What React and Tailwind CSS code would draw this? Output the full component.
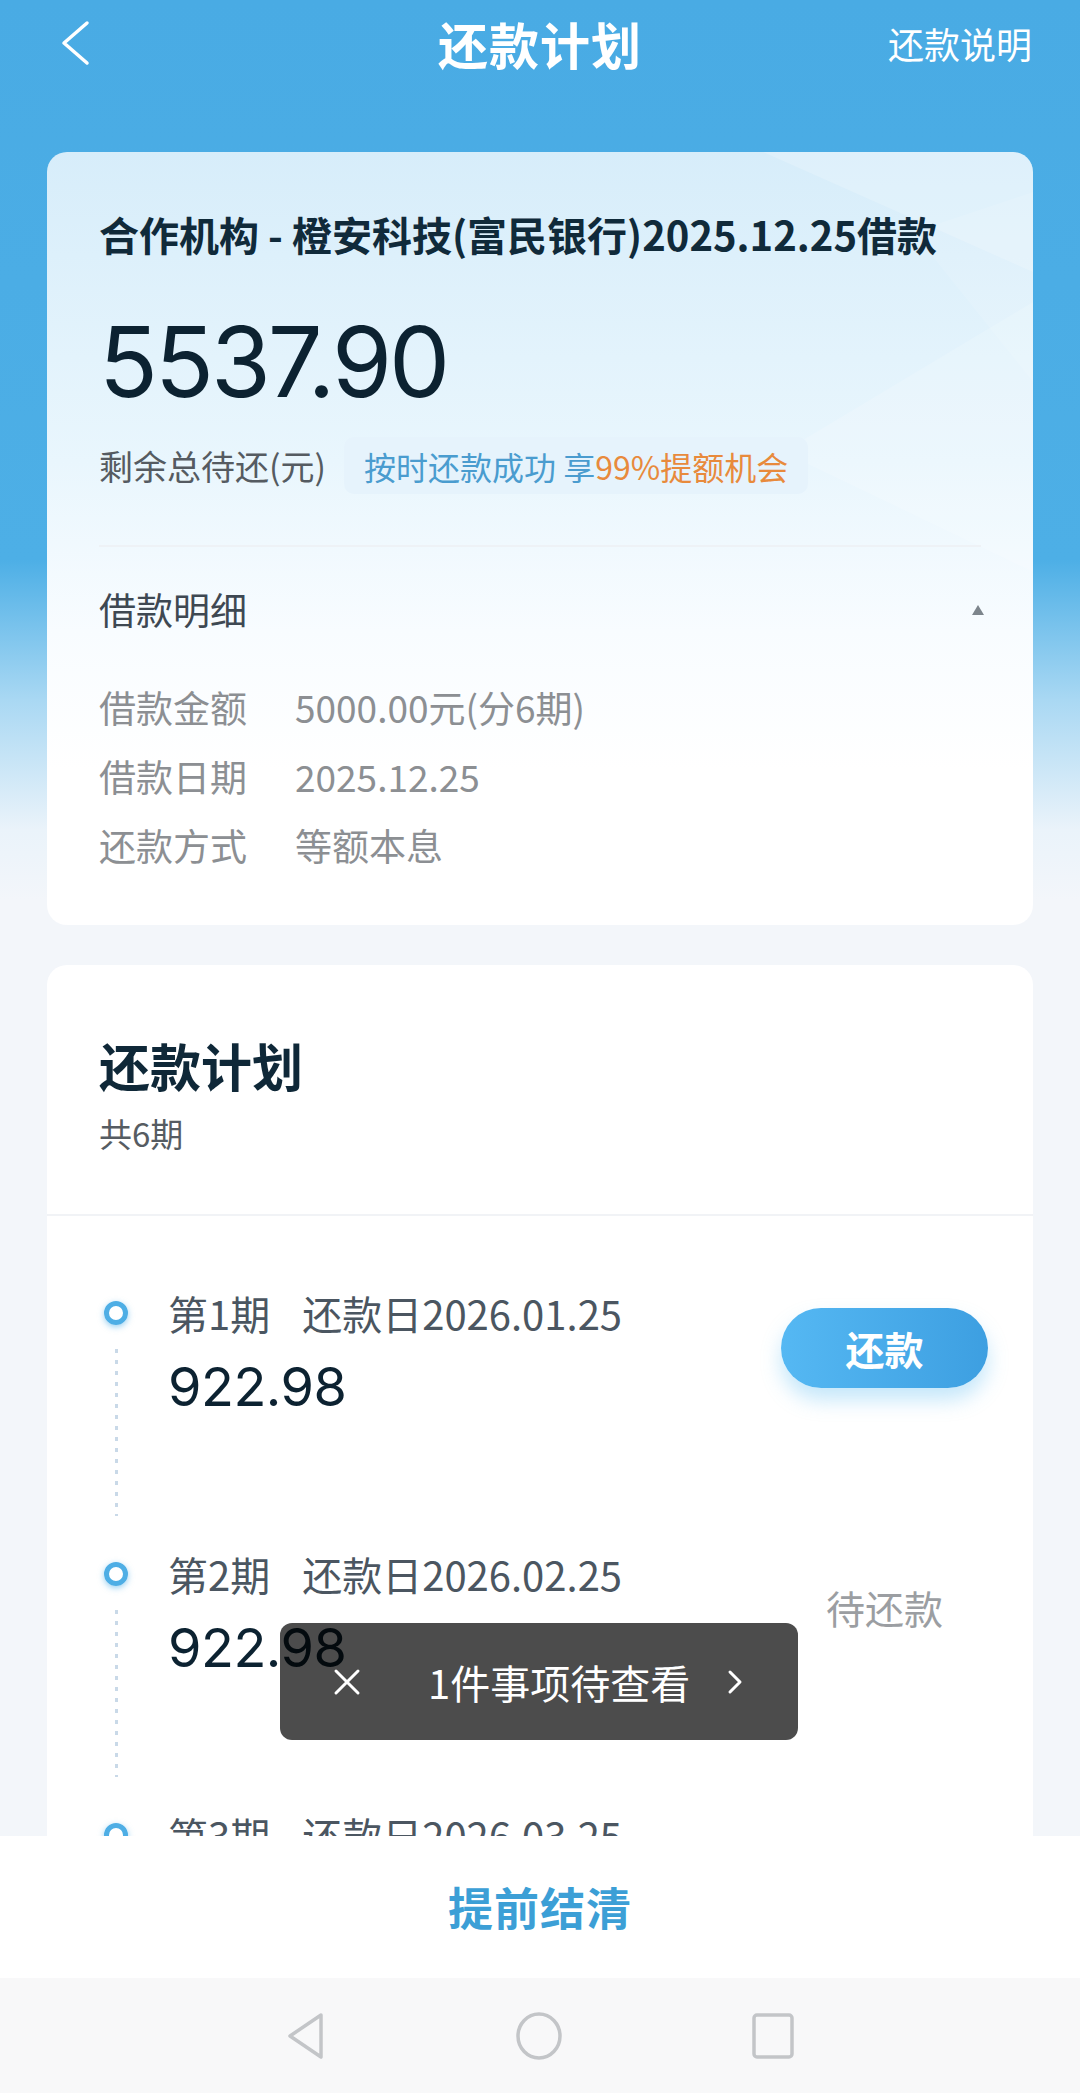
import React from "react";

const PLANS = [
  { no: 1, date: "2026.01.25", amount: "922.98", due: true },
  { no: 2, date: "2026.02.25", amount: "922.98", due: false },
  { no: 3, date: "2026.03.25", amount: "922.98", due: false },
];

const DETAILS = [
  { label: "借款金额", value: "5000.00元(分6期)" },
  { label: "借款日期", value: "2025.12.25" },
  { label: "还款方式", value: "等额本息" },
];

const Header = () => (
  <div className="h-[86px] grid grid-cols-[1fr_auto_1fr] items-center text-white">
    <div className="pl-[60px]">
      <svg width="32" height="46" viewBox="0 0 32 46" fill="none">
        <polyline points="27,3 4,23 27,43" stroke="#fff" strokeWidth="3.5" strokeLinecap="round" strokeLinejoin="round" />
      </svg>
    </div>
    <div className="text-[50px] font-bold leading-none tracking-[1px]">还款计划</div>
    <div className="text-right pr-[48px] text-[36px] leading-none">还款说明</div>
  </div>
);

const LoanCard = () => (
  <div className="relative overflow-hidden rounded-[20px] bg-[linear-gradient(180deg,#d7edfa_0%,#e9f6fd_40%,#f8fcff_62%,#ffffff_80%)] pt-[56px] pb-[45px] px-[52px]">
    {/* faint decoration top right */}
    <svg className="absolute right-0 top-0" width="420" height="560" viewBox="0 0 420 560" fill="none">
      <polygon points="150,0 420,0 420,120" fill="#ffffff" opacity="0.18" />
      <polygon points="420,150 170,300 420,420" fill="#ffffff" opacity="0.16" />
      <polygon points="300,80 420,40 420,230" fill="#ffffff" opacity="0.1" />
    </svg>

    <div className="relative">
      <div className="text-[40px] font-bold leading-[52px] text-[#102a3a] whitespace-nowrap">
        合作机构 - 橙安科技(富民银行)2025.12.25借款
      </div>
      <div className="mt-[52px] font-['Inter',sans-serif] text-[97px] font-normal leading-[100px] tracking-[-3px] text-[#0c2231]">
        5537.90
      </div>
      <div className="mt-[25px] h-[57px] flex items-center">
        <span className="text-[34px] text-[#555b61]">剩余总待还(元)</span>
        <span className="ml-[18px] h-[57px] flex items-center rounded-[10px] bg-[#e6f3fc] px-[20px] text-[32px]">
          <span className="text-[#4a9ccf]">按时还款成功 享</span>
          <span className="text-[#e88a3c]">99%提额机会</span>
        </span>
      </div>
      <div className="mt-[51px] h-[2px] bg-[#eef2f6]" />
      <div className="mt-[39px] h-[48px] flex items-center justify-between">
        <span className="text-[37px] text-[#3e4852]">借款明细</span>
        <svg width="14" height="12" viewBox="0 0 14 12" className="mr-[-4px]">
          <polygon points="7,1 13,11 1,11" fill="#7d858c" />
        </svg>
      </div>
      <div className="mt-[39px]">
        {DETAILS.map((d) => (
          <div key={d.label} className="h-[69px] flex items-center text-[37px] text-[#8c8f93]">
            <span className="w-[196px]">{d.label}</span>
            <span>{d.value}</span>
          </div>
        ))}
      </div>
    </div>
  </div>
);

const PlanItem = ({ item }) => (
  <div className="flex h-[261px] pl-[49px]">
    {/* timeline */}
    <div className="w-[40px] flex flex-col items-center">
      <div className="h-[48px] flex items-center">
        <div className="w-[24px] h-[24px] rounded-full border-[5px] border-[#4eaee5] shadow-[0_2px_6px_rgba(70,170,230,0.55)]" />
      </div>
      <div className="mt-[12px] w-[3px] h-[167px] bg-[repeating-linear-gradient(to_bottom,#c9d9e8_0px,#c9d9e8_4px,transparent_4px,transparent_11px)]" />
    </div>

    <div className="ml-[32px] flex-1">
      <div className="text-[40px] leading-[48px] text-[#4b5661] whitespace-nowrap">
        第{item.no}期<span className="ml-[32px]">还款日{item.date}</span>
      </div>
      <div className="mt-[15px] font-['Inter',sans-serif] text-[54px] leading-[70px] tracking-[-0.5px] text-[#0c2231]">
        {item.amount}
      </div>
    </div>

    <div className="w-[207px] mr-[45px] flex flex-col items-center">
      {item.due ? (
        <button className="mt-[19px] w-[207px] h-[80px] rounded-full bg-[linear-gradient(90deg,#55b8f3,#3d9fe1)] shadow-[0_12px_20px_rgba(90,185,240,0.35)] text-white text-[39px] font-bold">
          还款
        </button>
      ) : (
        <div className="mt-[33px] text-[39px] leading-[48px] text-[#9b9ea2]">待还款</div>
      )}
    </div>
  </div>
);

const PlanCard = () => (
  <div className="mt-[40px] rounded-t-[20px] bg-white">
    <div className="pt-[70px] pl-[52px]">
      <div className="text-[51px] font-bold leading-[60px] text-[#0f2838]">还款计划</div>
      <div className="mt-[16px] text-[33px] leading-[44px] text-[#565c62]">共6期</div>
    </div>
    <div className="mt-[59px] h-[2px] bg-[#f1f3f6]" />
    <div className="pt-[73px]">
      {PLANS.map((p) => (
        <PlanItem key={p.no} item={p} />
      ))}
    </div>
  </div>
);

const NavBar = () => (
  <div className="h-[115px] bg-[#f8f8f9] flex items-center justify-center gap-[188px]">
    <svg width="42" height="48" viewBox="0 0 42 48" fill="none">
      <path d="M36 3 L5 24 L36 45 Z" stroke="#c3c5c8" strokeWidth="3.5" strokeLinejoin="round" />
    </svg>
    <svg width="48" height="48" viewBox="0 0 48 48" fill="none">
      <ellipse cx="24" cy="24" rx="21" ry="22" stroke="#c3c5c8" strokeWidth="3.5" />
    </svg>
    <svg width="44" height="48" viewBox="0 0 44 48" fill="none">
      <rect x="3" y="3" width="38" height="42" rx="3" stroke="#c3c5c8" strokeWidth="3.5" />
    </svg>
  </div>
);

export default function App() {
  return (
    <div className="relative w-[1080px] h-[2093px] overflow-hidden flex flex-col font-['Noto_Sans_CJK_SC',sans-serif] bg-[linear-gradient(180deg,#49abe4_0px,#4dafe6_560px,#a9d8f3_700px,#eaf3fa_830px,#f3f6fa_900px,#f3f6fa_100%)]">
      <div className="h-[1836px] overflow-hidden">
        <Header />
        <div className="px-[47px] pt-[66px]">
          <LoanCard />
          <PlanCard />
        </div>
      </div>

      {/* bottom action */}
      <div className="h-[142px] bg-white flex items-center justify-center">
        <span className="text-[45px] font-bold text-[#3c9fd6] tracking-[1px]">提前结清</span>
      </div>
      <NavBar />

      {/* toast */}
      <div className="absolute left-[280px] top-[1623px] w-[518px] h-[117px] rounded-[12px] bg-black/70 flex items-center text-white">
        <svg className="ml-[52px]" width="30" height="30" viewBox="0 0 30 30">
          <path d="M4 4 L26 26 M26 4 L4 26" stroke="#fff" strokeWidth="3" strokeLinecap="round" />
        </svg>
        <span className="ml-[66px] text-[40px] leading-none">1件事项待查看</span>
        <svg className="ml-[36px]" width="18" height="30" viewBox="0 0 18 30" fill="none">
          <polyline points="4,5 14,15 4,25" stroke="#fff" strokeWidth="3" strokeLinecap="round" strokeLinejoin="round" />
        </svg>
      </div>
    </div>
  );
}
